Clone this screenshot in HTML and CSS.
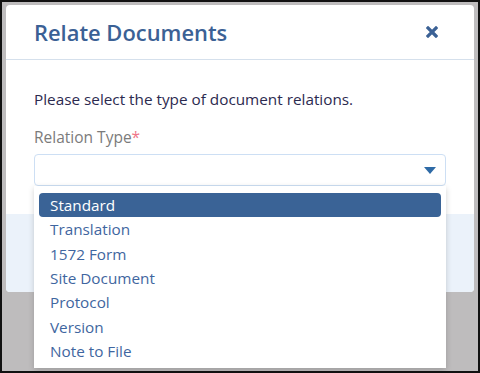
FILE: index.html
```html
<!DOCTYPE html>
<html lang="en">
<head>
    <meta charset="UTF-8">
    <title>Relate Documents</title>
    <link rel="stylesheet" href="styles.css">
</head>
<body>

<div class="frame">
    <div class="modal">
        <div class="modal-header">
            <div class="modal-title">Relate Documents</div>
            <svg class="close" width="12" height="12" viewBox="0 0 12 12">
                <path d="M2 2 L10 10 M10 2 L2 10" stroke="#3b6195" stroke-width="3.2" stroke-linecap="square"/>
            </svg>
        </div>
        <div class="modal-body">
            <p class="intro">Please select the type of document relations.</p>
            <label class="field-label">Relation Type<span class="req">*</span></label>
            <div class="select-wrap">
                <div class="select">
                    <svg class="caret" width="12" height="7" viewBox="0 0 12 7">
                        <path d="M0 0 H12 L6 7 Z" fill="#2e6aa6"/>
                    </svg>
                </div>
                <ul class="options">
                    <li class="active">Standard</li>
                    <li>Translation</li>
                    <li>1572 Form</li>
                    <li>Site Document</li>
                    <li>Protocol</li>
                    <li>Version</li>
                    <li>Note to File</li>
                </ul>
            </div>
        </div>
        <div class="modal-footer"></div>
    </div>
</div>

</body>
</html>
```

FILE: styles.css
```css
body {
    margin: 0;
    font-family: 'Open Sans', 'Liberation Sans', sans-serif;
}
.frame {
    width: 480px;
    height: 373px;
    box-sizing: border-box;
    border: 2px solid #111;
    background-color: #bebcbd;
    padding: 3px 4px;
    overflow: hidden;
}
.modal {
    background-color: white;
    border-radius: 4px;
    height: 287px;
    display: flex;
    flex-direction: column;
}
.modal-header {
    height: 55px;
    box-sizing: border-box;
    border-bottom: 1px solid #d5e0ec;
    display: flex;
    align-items: center;
    justify-content: space-between;
    padding: 0 36px 0 28px;
}
.modal-title {
    font-size: 21.9px;
    font-weight: 600;
    color: #3b6195;
    padding-top: 1px;
}
.modal-body {
    padding: 29px 28px 0;
    height: 154px;
    box-sizing: border-box;
}
.intro {
    margin: 0;
    font-size: 15.3px;
    line-height: 20px;
    color: #2c2a4f;
}
.field-label {
    display: block;
    margin-top: 18px;
    font-size: 15.5px;
    line-height: 20px;
    color: #7b7b7b;
}
.req {
    color: #f0768a;
}
.select-wrap {
    position: relative;
    margin-top: 7px;
}
.select {
    height: 32px;
    box-sizing: border-box;
    border: 1px solid #cddff4;
    border-radius: 4px;
    display: flex;
    align-items: center;
    justify-content: flex-end;
    padding-right: 9px;
}
.options {
    position: absolute;
    top: 32px;
    left: 0;
    right: 0;
    margin: 0;
    padding: 7px 5px 5px;
    list-style: none;
    background-color: white;
    box-shadow: 0 2px 6px rgba(0, 0, 0, 0.18);
    z-index: 2;
}
.options li {
    height: 24.33px;
    line-height: 24px;
    padding-left: 11px;
    font-size: 15.3px;
    color: #3f66a0;
    border-radius: 4px;
}
.options li.active {
    background-color: #3a6396;
    color: white;
}
.modal-footer {
    flex: 1;
    background-color: #ebf2fa;
    border-radius: 0 0 4px 4px;
}
```
